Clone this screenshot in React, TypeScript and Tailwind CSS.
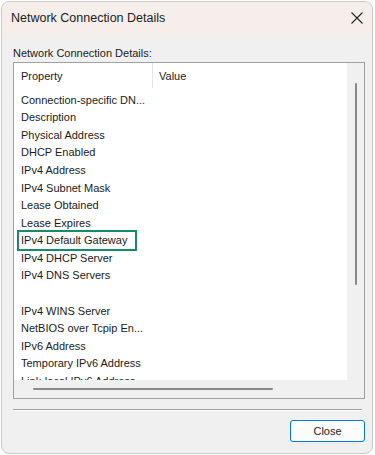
import React from "react";

const rows = [
  "Connection-specific DN...",
  "Description",
  "Physical Address",
  "DHCP Enabled",
  "IPv4 Address",
  "IPv4 Subnet Mask",
  "Lease Obtained",
  "Lease Expires",
  "IPv4 Default Gateway",
  "IPv4 DHCP Server",
  "IPv4 DNS Servers",
  "",
  "IPv4 WINS Server",
  "NetBIOS over Tcpip En...",
  "IPv6 Address",
  "Temporary IPv6 Address",
  "Link-local IPv6 Address",
];

const font = { fontFamily: '"Liberation Sans", Arial, sans-serif' };

export default function App() {
  return (
    <div className="w-[375px] h-[455px] bg-white p-[1px] pr-[2px]" style={font}>
      <div className="h-full flex flex-col border border-[#c9c9c9] rounded-[8px] overflow-hidden bg-[#f0f0f0]">
        {/* title bar */}
        <div className="h-[32px] shrink-0 bg-[#f5eeea] flex items-center justify-between pl-[9px] pr-[7px]">
          <span className="text-[12.5px] text-[#1c1c1c] mt-[1px]">Network Connection Details</span>
          <svg width="14" height="14" viewBox="0 0 14 14" className="mr-[1px]">
            <path d="M1.5 1.5 L12.5 12.5 M12.5 1.5 L1.5 12.5" stroke="#262626" strokeWidth="1.1" fill="none" />
          </svg>
        </div>

        <div className="flex-1 flex flex-col pl-[11px] pr-[7px]">
          <div className="mt-[12px] h-[14px] text-[11px] leading-[14px] text-[#1b1b1b]">
            Network Connection Details:
          </div>

          {/* list box */}
          <div className="mt-[2px] h-[337px] border border-[#a0a0a0] flex flex-col">
            <div className="flex-1 flex min-h-0">
              <div className="flex-1 bg-white overflow-hidden text-[11px] text-[#1b1b1b]">
                <div className="h-[28px] flex">
                  <div className="w-[139px] pl-[7px] pt-[2px] flex items-center border-r border-[#e5e5e5] mb-[3px]">
                    Property
                  </div>
                  <div className="flex-1 pl-[6px] pt-[2px] flex items-center mb-[3px]">Value</div>
                </div>
                {rows.map((r, i) => (
                  <div key={i} className="h-[17.6px] flex items-center pl-[7px] relative">
                    <span className="whitespace-nowrap">{r}</span>
                    {r === "IPv4 Default Gateway" && (
                      <div className="absolute left-[3px] top-[-2px] w-[120px] h-[21px] border-2 border-[#178a6c]" />
                    )}
                  </div>
                ))}
              </div>
              {/* vertical scrollbar */}
              <div className="w-[17px] bg-[#f0f0f0] flex justify-center pt-[20px]">
                <div className="w-[2px] h-[202px] ml-[1px] bg-[#8a8a8a] rounded-full" />
              </div>
            </div>
            {/* horizontal scrollbar */}
            <div className="h-[18px] shrink-0 flex items-center bg-[#f0f0f0]">
              <div className="ml-[19px] w-[240px] h-[2px] bg-[#8a8a8a] rounded-full" />
            </div>
          </div>

          <div className="mt-[10px] h-[1px] bg-[#a0a0a0] mr-[3px]" />
          <div className="h-[1px] bg-white mr-[3px]" />

          <div className="mt-[9px] flex justify-end">
            <button className="w-[75px] h-[22px] border border-[#0078d4] rounded-[3px] bg-[#fdfdfd] text-[11px] text-[#1b1b1b] flex items-center justify-center">
              Close
            </button>
          </div>
        </div>
      </div>
    </div>
  );
}
